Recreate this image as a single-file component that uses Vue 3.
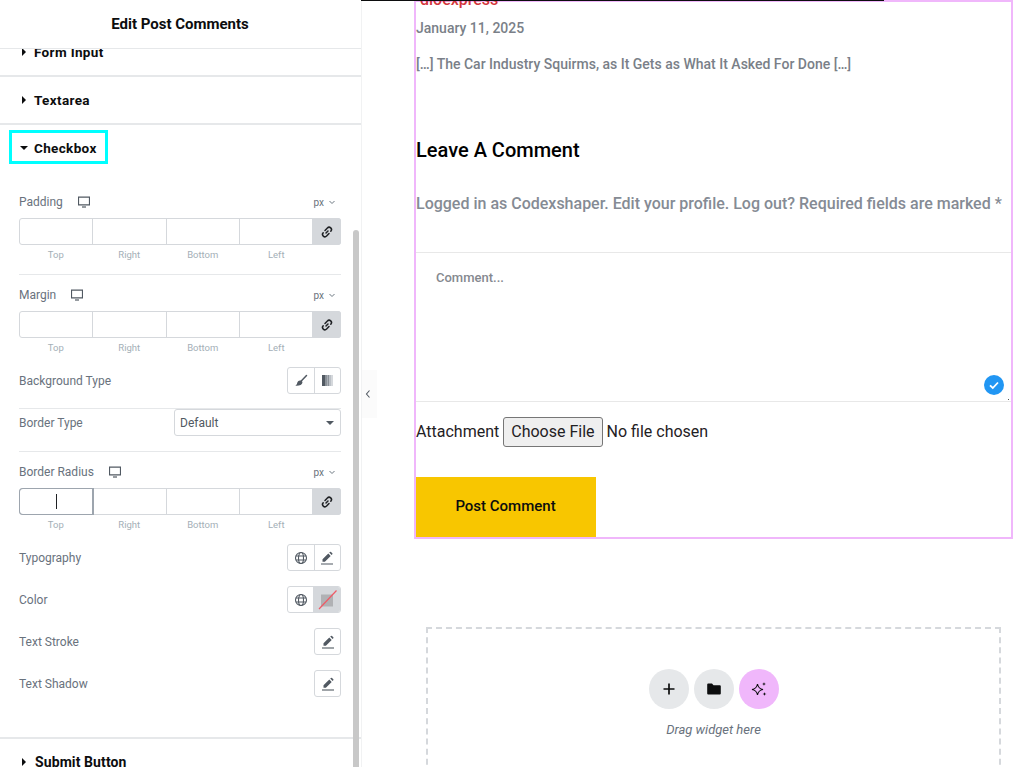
<script setup>
const sides = ['Top', 'Right', 'Bottom', 'Left']
</script>

<template>
  <div class="app">
    <aside class="panel">
      <header class="panel-head">Edit Post Comments</header>
      <div class="scroll">
        <div class="inner">
          <section class="row">
            <div class="title"><span class="caret-r"></span>Form Input</div>
          </section>
          <section class="row">
            <div class="title"><span class="caret-r"></span>Textarea</div>
          </section>
          <section class="row open">
            <div class="title active"><span class="caret-d"></span>Checkbox</div>
          </section>

          <div class="controls">
            <div class="label-row first">
              <span class="lbl">Padding</span>
              <svg class="monitor" viewBox="0 0 12 12"><path d="M.5 1.200h11v7.600H.5z" fill="none" stroke="#515962" stroke-width="1.200"/><path d="M4 11h4" stroke="#515962" stroke-width="1.200"/></svg>
              <span class="unit">px<svg viewBox="0 0 8 8"><path d="M1.500 3l2.500 2.500L6.500 3" fill="none" stroke="#6d7882" stroke-width="1"/></svg></span>
            </div>
            <div class="dims">
              <div v-for="s in sides" :key="s" class="cell"></div>
              <div class="link">
                <svg viewBox="0 0 14 14"><path d="M6 8l2-2M5 5.500L7.400 3a2.200 2.200 0 013.400 3.200M9 8.500l-2.400 2.500a2.200 2.200 0 01-3.400-3.200" fill="none" stroke="#1f2124" stroke-width="1.500" stroke-linecap="round"/></svg>
              </div>
            </div>
            <div class="subs"><span v-for="s in sides" :key="s">{{ s }}</span></div>
            <div class="divider d1"></div>

            <div class="label-row second">
              <span class="lbl">Margin</span>
              <svg class="monitor" viewBox="0 0 12 12"><path d="M.5 1.200h11v7.600H.5z" fill="none" stroke="#515962" stroke-width="1.200"/><path d="M4 11h4" stroke="#515962" stroke-width="1.200"/></svg>
              <span class="unit">px<svg viewBox="0 0 8 8"><path d="M1.500 3l2.500 2.500L6.500 3" fill="none" stroke="#6d7882" stroke-width="1"/></svg></span>
            </div>
            <div class="dims">
              <div v-for="s in sides" :key="s" class="cell"></div>
              <div class="link">
                <svg viewBox="0 0 14 14"><path d="M6 8l2-2M5 5.500L7.400 3a2.200 2.200 0 013.400 3.200M9 8.500l-2.400 2.500a2.200 2.200 0 01-3.400-3.200" fill="none" stroke="#1f2124" stroke-width="1.500" stroke-linecap="round"/></svg>
              </div>
            </div>
            <div class="subs"><span v-for="s in sides" :key="s">{{ s }}</span></div>

            <div class="line bg">
              <span class="lbl">Background Type</span>
              <div class="btn-group">
                <div class="btn">
                  <svg viewBox="0 0 14 14"><path d="M12.500 1.500L7 7.200" stroke="#515962" stroke-width="1.500" stroke-linecap="round"/><path d="M6.200 6.400c1.600 0 2.500 1.100 2.200 2.400-.4 2.200-3 3.200-7.200 2.900 1.300-.7 1.700-1.500 1.900-2.500.3-1.600 1.500-2.900 3.100-2.800z" fill="#515962"/></svg>
                </div>
                <div class="btn">
                  <div class="gradient"></div>
                </div>
              </div>
            </div>
            <div class="divider d2"></div>
            <div class="line">
              <span class="lbl">Border Type</span>
              <div class="select"><span>Default</span><i></i></div>
            </div>
            <div class="divider d3"></div>

            <div class="label-row third">
              <span class="lbl">Border Radius</span>
              <svg class="monitor" viewBox="0 0 12 12"><path d="M.5 1.200h11v7.600H.5z" fill="none" stroke="#515962" stroke-width="1.200"/><path d="M4 11h4" stroke="#515962" stroke-width="1.200"/></svg>
              <span class="unit">px<svg viewBox="0 0 8 8"><path d="M1.500 3l2.500 2.500L6.500 3" fill="none" stroke="#6d7882" stroke-width="1"/></svg></span>
            </div>
            <div class="dims focused">
              <div v-for="(s, i) in sides" :key="s" class="cell" :class="{ focus: i === 0 }"><b v-if="i === 0" class="cursor"></b></div>
              <div class="link">
                <svg viewBox="0 0 14 14"><path d="M6 8l2-2M5 5.500L7.400 3a2.200 2.200 0 013.400 3.200M9 8.500l-2.400 2.500a2.200 2.200 0 01-3.400-3.200" fill="none" stroke="#1f2124" stroke-width="1.500" stroke-linecap="round"/></svg>
              </div>
            </div>
            <div class="subs"><span v-for="s in sides" :key="s">{{ s }}</span></div>

            <div class="line tall">
              <span class="lbl">Typography</span>
              <div class="btn-group">
                <div class="btn">
                  <svg viewBox="0 0 14 14" class="globe"><circle cx="7" cy="7" r="5.500"/><ellipse cx="7" cy="7" rx="2.500" ry="5.500"/><path d="M1.800 5h10.400M1.800 9h10.400"/></svg>
                </div>
                <div class="btn">
                  <svg viewBox="0 0 14 14"><path d="M2.500 8.300L8.300 2.500l2.400 2.400-5.800 5.800H2.500zM9.200 1.600l.7-.7a.8.8 0 011.100 0l1.300 1.300a.8.8 0 010 1.100l-.7.7z" fill="#515962"/><path d="M1 13h12" stroke="#515962" stroke-width="1.100"/></svg>
                </div>
              </div>
            </div>
            <div class="line tall">
              <span class="lbl">Color</span>
              <div class="btn-group">
                <div class="btn">
                  <svg viewBox="0 0 14 14" class="globe"><circle cx="7" cy="7" r="5.500"/><ellipse cx="7" cy="7" rx="2.500" ry="5.500"/><path d="M1.800 5h10.400M1.800 9h10.400"/></svg>
                </div>
                <div class="btn swatch">
                  <svg viewBox="0 0 26 26"><rect x="7" y="7.500" width="12" height="12" fill="#b0b1b4"/><path d="M5 22L22.500 3.500" stroke="#ef5a66" stroke-width="1.200"/></svg>
                </div>
              </div>
            </div>
            <div class="line tall">
              <span class="lbl">Text Stroke</span>
              <div class="btn single">
                <svg viewBox="0 0 14 14"><path d="M2.500 8.300L8.300 2.500l2.400 2.400-5.800 5.800H2.500zM9.200 1.600l.7-.7a.8.8 0 011.100 0l1.300 1.300a.8.8 0 010 1.100l-.7.7z" fill="#515962"/><path d="M1 13h12" stroke="#515962" stroke-width="1.100"/></svg>
              </div>
            </div>
            <div class="line tall">
              <span class="lbl">Text Shadow</span>
              <div class="btn single">
                <svg viewBox="0 0 14 14"><path d="M2.500 8.300L8.300 2.500l2.400 2.400-5.800 5.800H2.500zM9.200 1.600l.7-.7a.8.8 0 011.100 0l1.300 1.300a.8.8 0 010 1.100l-.7.7z" fill="#515962"/><path d="M1 13h12" stroke="#515962" stroke-width="1.100"/></svg>
              </div>
            </div>
          </div>

          <section class="row submit">
            <div class="title arial"><span class="caret-r"></span>Submit Button</div>
          </section>
        </div>
      </div>
      <div class="scrollbar"></div>
    </aside>

    <div class="handle">
      <svg viewBox="0 0 8 10"><path d="M5.500 1.500L2.500 5l3 3.500" fill="none" stroke="#515962" stroke-width="1.100"/></svg>
    </div>

    <main class="canvas">
      <div class="pink">
        <div class="author">dioexpress</div>
        <div class="date">January 11, 2025</div>
        <div class="excerpt">[…] The Car Industry Squirms, as It Gets as What It Asked For Done […]</div>
        <h2 class="heading">Leave A Comment</h2>
        <p class="logged">Logged in as Codexshaper. Edit your profile. Log out? Required fields are marked *</p>
        <div class="textarea">
          <span>Comment...</span>
          <div class="tick">
            <svg viewBox="0 0 20 20"><path d="M6 10.300l2.800 2.700L14 7.500" fill="none" stroke="#fff" stroke-width="1.800"/></svg>
          </div>
          <i class="dot"></i>
        </div>
        <div class="attach">
          <label>Attachment</label>
          <input type="file" />
        </div>
        <button class="post">Post Comment</button>
      </div>

      <div class="drop">
        <div class="drop-btns">
          <div class="round">
            <svg viewBox="0 0 16 16"><path d="M8 2.500v11M2.500 8h11" stroke="#0c0d0e" stroke-width="1.700"/></svg>
          </div>
          <div class="round">
            <svg viewBox="0 0 16 16"><path d="M1.200 3.500a1 1 0 011-1h3.800l1.500 1.700h6.300a1 1 0 011 1v7.300a1 1 0 01-1 1H2.200a1 1 0 01-1-1z" fill="#0c0d0e"/></svg>
          </div>
          <div class="round ai">
            <svg viewBox="0 0 16 16"><path d="M6.500 3c.6 3.300 1.900 4.900 5.500 5.500-3.600.6-4.900 2.200-5.500 5.500-.6-3.300-1.900-4.900-5.500-5.500 3.600-.6 4.900-2.200 5.500-5.500z" fill="none" stroke="#0c0d0e" stroke-width="1.100"/><path d="M13 1c.2 1.300.6 1.800 2 2-1.400.2-1.800.7-2 2-.2-1.300-.6-1.800-2-2 1.400-.2 1.800-.7 2-2zM13.500 11c.2 1.300.6 1.800 2 2-1.400.2-1.800.7-2 2-.2-1.300-.6-1.800-2-2 1.400-.2 1.800-.7 2-2z" fill="#0c0d0e"/></svg>
          </div>
        </div>
        <div class="drop-text">Drag widget here</div>
      </div>
    </main>

    <div class="topline"></div>
  </div>
</template>

<style>
html, body { margin: 0; background: #fff; overflow: hidden; }
</style>

<style scoped>
.app {
  position: relative;
  display: flex;
  width: 1036px;
  height: 767px;
  overflow: hidden;
  background: #fff;
  font-family: Roboto, "Liberation Sans", sans-serif;
}
.topline { position: absolute; left: 0; top: 0; width: 884px; height: 1px; background: #0c0d0e; }

/* panel */
.panel {
  position: relative;
  flex: 0 0 362px;
  width: 362px;
  height: 767px;
  display: flex;
  flex-direction: column;
  background: #fff;
  box-sizing: border-box;
  border-right: 1px solid #f1f2f3;
}
.panel-head {
  flex: 0 0 48px;
  display: flex;
  align-items: center;
  justify-content: center;
  padding-right: 1px;
  font-size: 15px;
  font-weight: 700;
  color: #0c0d0e;
  border-bottom: 1px solid #e6e8ea;
  position: relative;
  z-index: 1;
  background: #fff;
}
.scroll { flex: 1; min-height: 0; overflow: hidden; }
.inner { margin-top: -20px; }
.row {
  height: 46px;
  display: flex;
  align-items: center;
  padding-left: 9px;
  border-bottom: 2px solid #e6e8ea;
}
.row.open { border-bottom: 0; }
.row.submit { border-bottom: 0; border-top: 2px solid #e6e8ea; }
.title {
  display: flex;
  align-items: center;
  box-sizing: border-box;
  height: 34px;
  padding: 0 8px 0 8px;
  border: 3px solid transparent;
  font-size: 13.500px;
  font-weight: 700;
  letter-spacing: .35px;
  color: #0c0d0e;
}
.title.active { border-color: #00ffff; padding-top: 2px; margin-bottom: 2px; }
.title.arial { font-size: 14px; letter-spacing: .1px; }
.title.arial .caret-r { margin-right: 7px; }
.caret-r, .caret-d { display: inline-block; margin-right: 6px; box-sizing: border-box; }
.caret-r {
  height: 8px;
  border-left: 4.500px solid #0c0d0e;
  border-top: 4px solid transparent;
  border-bottom: 4px solid transparent;
  margin-left: 2px;
  width: 6px;
}
.caret-d {
  width: 8px;
  height: 4px;
  border-top: 4px solid #0c0d0e;
  border-left: 4px solid transparent;
  border-right: 4px solid transparent;
}

/* controls */
.controls { padding: 0 20px 40px 19px; }
.label-row { display: flex; align-items: center; height: 20px; }
.label-row.first { margin-top: 21px; }
.label-row.second { margin-top: 10px; }
.label-row.third { margin-top: 10px; }
.lbl { font-size: 12px; color: #69727d; white-space: nowrap; }
.monitor { width: 12px; height: 12px; margin-left: 15px; }
.unit {
  margin-left: auto;
  margin-right: 5px;
  display: inline-flex;
  align-items: center;
  gap: 4px;
  font-size: 10px;
  color: #69727d;
}
.unit svg { width: 8px; height: 8px; }
.dims {
  display: flex;
  height: 27px;
  margin-top: 6px;
  box-sizing: border-box;
  border: 1px solid #d5d8dc;
  border-radius: 3px;
}
.dims .cell { flex: 1; border-right: 1px solid #d5d8dc; position: relative; display: flex; align-items: center; justify-content: center; }
.dims .link {
  flex: 0 0 28px;
  background: #d5d8dc;
  display: flex;
  align-items: center;
  justify-content: center;
  margin: -1px -1px -1px 0;
  border-radius: 0 3px 3px 0;
}
.dims .link svg { width: 14px; height: 14px; }
.dims.focused .cell.focus { box-shadow: 0 0 0 1px #9da5ae; border-radius: 3px 0 0 3px; border-right-color: #9da5ae; }
.cursor { width: 1px; height: 15px; background: #1f2124; }
.subs {
  display: flex;
  height: 14px;
  margin-top: 3px;
  padding-right: 28px;
  font-size: 9.500px;
  line-height: 14px;
  color: #a4afb7;
}
.subs span { flex: 1; text-align: center; }
.divider { height: 1px; background: #e6e8ea; }
.d1 { margin-top: 12px; }
.d2 { margin-top: 14px; margin-bottom: 0; }
.d3 { margin-top: 15px; }
.line { display: flex; align-items: center; justify-content: space-between; height: 27px; }
.line.bg { margin-top: 12px; }
.line.tall { margin-top: 15px; }
.subs + .line.tall { margin-top: 12px; }
.btn-group { display: flex; box-sizing: border-box; height: 27px; width: 54px; border: 1px solid #d5d8dc; border-radius: 3px; overflow: hidden; }
.btn { flex: 1; display: flex; align-items: center; justify-content: center; }
.btn + .btn { border-left: 1px solid #d5d8dc; }
.btn svg { width: 14px; height: 14px; }
.btn.single { flex: 0 0 27px; box-sizing: border-box; height: 27px; border: 1px solid #d5d8dc; border-radius: 3px; }
.btn.swatch { background: #d5d8dc; border-left-color: #d5d8dc; }
.btn.swatch svg { width: 26px; height: 26px; }
.globe { fill: none; stroke: #515962; stroke-width: 1.100; }
.gradient { width: 11px; height: 11px; background: linear-gradient(90deg, #515962 0 25%, #8a9097 25% 45%, #a9afb6 45% 55%, #8a9097 55% 65%, #bcc1c7 65% 82%, #d5d8dc 82%); }
.select {
  box-sizing: border-box;
  width: 167px;
  height: 27px;
  border: 1px solid #d5d8dc;
  border-radius: 3px;
  display: flex;
  align-items: center;
  justify-content: space-between;
  padding: 0 6px 0 5px;
  font-size: 12px;
  color: #515962;
}
.select i { border-top: 4px solid #515962; border-left: 4px solid transparent; border-right: 4px solid transparent; }
.scrollbar {
  position: absolute;
  left: 353px;
  top: 230px;
  bottom: 0;
  width: 6px;
  background: #c8c8c8;
  border-radius: 3px 3px 0 0;
}
.handle {
  position: absolute;
  left: 362px;
  top: 370px;
  width: 15px;
  height: 48px;
  box-sizing: border-box;
  padding-right: 3px;
  background: #fbfbfb;
  display: flex;
  align-items: center;
  justify-content: center;
}
.handle svg { width: 8px; height: 10px; }

/* canvas */
.canvas { flex: 1; min-width: 0; padding-left: 52px; }
.pink {
  box-sizing: border-box;
  width: 599px;
  height: 539px;
  border: 2px solid #f0b7fb;
}
.author { margin-top: -12px; padding-left: 4px; font-size: 16px; line-height: 20px; font-weight: 500; color: #d3353c; height: 20px; clip-path: inset(10px 0 0 0); }
.date { margin-top: 8px; font-size: 14px; line-height: 20px; font-weight: 500; color: #7a7f88; }
.excerpt { margin-top: 16px; font-size: 14px; line-height: 20px; font-weight: 500; color: #7a7f88; }
.heading { margin: 62px 0 0; font-size: 20px; line-height: 28px; font-weight: 500; color: #000; }
.logged { margin: 28px 0 0; font-size: 16px; line-height: 24px; font-weight: 500; color: #858b94; white-space: nowrap; }
.textarea {
  position: relative;
  box-sizing: border-box;
  margin-top: 36px;
  height: 150px;
  padding: 16px 20px;
  border-top: 1px solid #e8e8e8;
  border-bottom: 1px solid #e8e8e8;
  font-size: 13px;
  line-height: 18px;
  font-weight: 500;
  color: #85898f;
}
.tick { position: absolute; right: 7px; bottom: 6px; width: 20px; height: 20px; border-radius: 50%; background: #2196f3; }
.tick svg { display: block; width: 20px; height: 20px; }
.dot { position: absolute; right: 2px; bottom: 1px; width: 1px; height: 1px; background: #555; }
.attach { display: flex; align-items: center; gap: 4px; height: 30px; margin-top: 15px; font-size: 16px; color: #1f2124; }
.attach label { padding-bottom: 2px; }
.attach input { font: 16px Roboto, sans-serif; color: #1f2124; }
.attach input::file-selector-button {
  font: 16px Roboto, sans-serif;
  height: 30px;
  padding: 0 7px 2px;
  margin-right: 4px;
  border: 1px solid #767676;
  border-radius: 3px;
  background: #efefef;
  color: #1f2124;
}
.post {
  display: block;
  width: 180px;
  height: 60px;
  margin-top: 30px;
  border: 0;
  padding: 0 1px 2px 0;
  background: #f8c600;
  font: 500 15px Roboto, sans-serif;
  color: #0c0d0e;
}
.drop {
  box-sizing: border-box;
  width: 575px;
  height: 300px;
  margin: 88px 0 0 12px;
  padding-top: 40px;
  border: 2px dashed #d5d8dc;
}
.drop-btns { display: flex; justify-content: center; gap: 5px; }
.round { width: 40px; height: 40px; border-radius: 50%; background: #e6e8ea; display: flex; align-items: center; justify-content: center; }
.round svg { width: 16px; height: 16px; }
.round.ai { background: #f0b7fb; }
.drop-text { margin-top: 11px; text-align: center; font-size: 13px; line-height: 20px; font-style: italic; color: #69727d; }
</style>
